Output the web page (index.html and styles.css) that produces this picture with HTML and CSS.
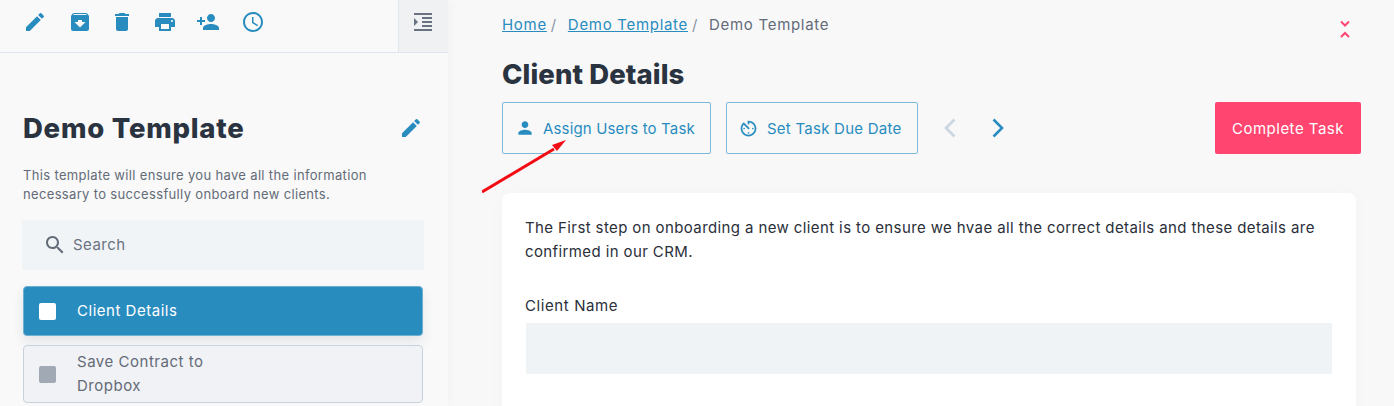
FILE: index.html
```html
<!DOCTYPE html>
<html lang="en">
<head>
<meta charset="utf-8">
<title>Client Details</title>
<link rel="stylesheet" href="styles.css">
</head>
<body>
<div class="app">
  <aside class="sidebar">
    <div class="toolbar">
      <div class="tools">
        <svg class="icon" viewBox="0 0 24 24"><path d="M3 17.25V21h3.75L17.81 9.94l-3.75-3.75L3 17.25zM20.71 7.04a.996.996 0 000-1.41l-2.34-2.34a.996.996 0 00-1.41 0l-1.83 1.83 3.75 3.75 1.83-1.83z"/></svg>
        <svg class="icon tool-archive" viewBox="0 0 24 24"><path d="M20.54 5.23l-1.39-1.68C18.88 3.21 18.47 3 18 3H6c-.47 0-.88.21-1.16.55L3.46 5.23C3.17 5.57 3 6.02 3 6.5V19c0 1.1.9 2 2 2h14c1.1 0 2-.9 2-2V6.5c0-.48-.17-.93-.46-1.27zM12 17.5L6.5 12H10v-2h4v2h3.5L12 17.5zM5.12 5l.81-1h12l.94 1H5.12z"/></svg>
        <svg class="icon tool-trash" viewBox="0 0 24 24"><path d="M6 19c0 1.1.9 2 2 2h8c1.1 0 2-.9 2-2V7H6v12zM19 4h-3.5l-1-1h-5l-1 1H5v2h14V4z"/></svg>
        <svg class="icon" viewBox="0 0 24 24"><path d="M19 8H5c-1.66 0-3 1.34-3 3v6h4v4h12v-4h4v-6c0-1.66-1.34-3-3-3zm-3 11H8v-5h8v5zm3-7c-.55 0-1-.45-1-1s.45-1 1-1 1 .45 1 1-.45 1-1 1zm-1-9H6v4h12V3z"/></svg>
        <svg class="icon" viewBox="0 0 24 24"><path d="M15 12c2.21 0 4-1.79 4-4s-1.79-4-4-4-4 1.79-4 4 1.79 4 4 4zm-9-2V7H4v3H1v2h3v3h2v-3h3v-2H6zm9 4c-2.67 0-8 1.34-8 4v2h16v-2c0-2.66-5.33-4-8-4z"/></svg>
        <svg class="icon tool-clock" viewBox="0 0 24 24"><path d="M11.99 2C6.47 2 2 6.48 2 12s4.47 10 9.99 10C17.52 22 22 17.52 22 12S17.52 2 11.99 2zM12 20c-4.42 0-8-3.58-8-8s3.58-8 8-8 8 3.58 8 8-3.58 8-8 8zm.5-13H11v6l5.25 3.15.75-1.23-4.5-2.67z"/></svg>
      </div>
      <div class="toggle">
        <svg class="icon icon-grey" viewBox="0 0 24 24"><path d="M3 21h18v-2H3v2zM3 8v8l4-4-4-4zm8 9h10v-2H11v2zM3 3v2h18V3H3zm8 6h10V7H11v2zm0 4h10v-2H11v2z"/></svg>
      </div>
    </div>
    <div class="side-body">
      <div class="side-title">
        <h2>Demo Template</h2>
        <svg class="icon" viewBox="0 0 24 24"><path d="M3 17.25V21h3.75L17.81 9.94l-3.75-3.75L3 17.25zM20.71 7.04a.996.996 0 000-1.41l-2.34-2.34a.996.996 0 00-1.41 0l-1.83 1.83 3.75 3.75 1.83-1.83z"/></svg>
      </div>
      <p class="side-desc">This template will ensure you have all the information necessary to successfully onboard new clients.</p>
      <div class="search">
        <svg class="icon icon-search" viewBox="0 0 24 24"><path d="M15.5 14h-.79l-.28-.27C15.41 12.59 16 11.11 16 9.5 16 5.91 13.09 3 9.5 3S3 5.91 3 9.5 5.91 16 9.5 16c1.61 0 3.09-.59 4.23-1.57l.27.28v.79l5 4.99L20.49 19l-4.99-5zm-6 0C7.01 14 5 11.99 5 9.5S7.01 5 9.5 5 14 7.01 14 9.5 11.99 14 9.5 14z"/></svg>
        <span class="search-text">Search</span>
      </div>
      <div class="task task-active">
        <span class="check"></span>
        <span class="task-label">Client Details</span>
      </div>
      <div class="task task-next">
        <span class="check"></span>
        <span class="task-label">Save Contract to<br>Dropbox</span>
      </div>
    </div>
  </aside>
  <main class="main">
    <div class="crumb-row">
      <nav class="crumbs">
        <a href="#">Home</a><span class="sep">/</span>
        <a href="#">Demo Template</a><span class="sep">/</span>
        <span class="crumb-current">Demo Template</span>
      </nav>
      <svg class="collapse" viewBox="0 0 16 20"><path d="M4 1.500l4 4 4-4M4 17l4-4 4 4"/></svg>
    </div>
    <h1>Client Details</h1>
    <div class="actions">
      <button class="btn btn-assign">
        <svg class="icon icon-user" viewBox="0 0 24 24"><path d="M12 12c2.210 0 4-1.790 4-4s-1.790-4-4-4-4 1.790-4 4 1.790 4 4 4zm0 2c-2.670 0-8 1.340-8 4v2h16v-2c0-2.660-5.330-4-8-4z"/></svg>
        Assign Users to Task
      </button>
      <button class="btn btn-due">
        <svg class="icon icon-timer" viewBox="0 0 24 24"><path d="M11 17c0 .55.45 1 1 1s1-.45 1-1-.45-1-1-1-1 .45-1 1zm0-14v4h2V5.080c3.390.49 6 3.390 6 6.920 0 3.870-3.130 7-7 7s-7-3.130-7-7c0-1.680.59-3.220 1.580-4.420L12 13l1.410-1.410-6.800-6.800v.02C4.420 6.450 3 9.050 3 12c0 4.970 4.020 9 9 9 4.970 0 9-4.030 9-9s-4.030-9-9-9h-1zm7 9c0-.55-.45-1-1-1s-1 .45-1 1 .45 1 1 1 1-.45 1-1zM6 12c0 .55.45 1 1 1s1-.45 1-1-.45-1-1-1-1 .45-1 1z"/></svg>
        Set Task Due Date
      </button>
      <svg class="nav-chevron nav-prev" viewBox="0 0 12 20"><path d="M10.500 1.500L2 10l8.500 8.500"/></svg>
      <svg class="nav-chevron nav-next" viewBox="0 0 12 20"><path d="M1.500 1.500L10 10l-8.500 8.500"/></svg>
      <button class="btn-complete">Complete Task</button>
    </div>
    <section class="card">
      <p class="card-intro">The First step on onboarding a new client is to ensure we hvae all the correct details and these details are confirmed in our CRM.</p>
      <label class="field-label">Client Name</label>
      <div class="field"></div>
    </section>
    <svg class="annotation" viewBox="0 0 90 60"><path class="annotation-line" d="M0 57L72 14"/><path class="annotation-head" d="M84 5L70 10L75 16Z"/></svg>
  </main>
</div>
</body>
</html>
```
FILE: styles.css
```css
* { box-sizing: border-box; }
html, body { margin: 0; height: 406px; overflow: hidden; }
body { font-family: Inter, "Liberation Sans", sans-serif; background: #f8f8f8; color: #2a3340; }
.app { display: flex; height: 406px; overflow: hidden; }
.icon { width: 24px; height: 24px; fill: #288cbf; flex: none; display: block; }
.icon-grey { fill: #687280; }

.sidebar { width: 448px; flex: none; background: #f9f9f9; box-shadow: 0 0 12px rgba(30,40,60,.04); }
.toolbar { height: 53px; display: flex; justify-content: space-between; border-bottom: 1px solid #dfe6ed; }
.tools { display: flex; gap: 19px; padding: 10px 0 0 23px; }
.tool-archive { margin-left: 2px; }
.tool-trash { margin-left: -1px; }
.tool-clock { margin-left: 2px; }
.toggle { width: 50px; background: #f0f1f3; border-left: 1px solid #dfe6ed; padding: 10px 0 0 12px; }

.side-body { padding: 57px 25px 0 23px; }
.side-title { display: flex; justify-content: space-between; align-items: center; }
.side-title h2 { margin: 0; font-size: 27.5px; line-height: 36px; font-weight: 800; letter-spacing: .75px; color: #2a3340; }
.side-desc { margin: 20px 0 0; width: 360px; font-size: 13px; line-height: 19px; letter-spacing: .34px; color: #636b78; }
.search { display: flex; align-items: center; gap: 6px; height: 50px; margin: 16px 0 16px -1px; width: 402px; padding-left: 21px; background: #f1f4f7; font-size: 15px; letter-spacing: .45px; color: #6a7280; }
.search-text { margin-top: -2px; }
.icon-search { fill: #636b78; }
.task { display: flex; align-items: center; width: 400px; border-radius: 4px; font-size: 15px; line-height: 24px; letter-spacing: .52px; }
.check { width: 17px; height: 17px; margin: 0 21px 0 15px; border-radius: 2px; flex: none; }
.task-active { height: 50px; background: #288cbf; color: #fff; border: 1px solid #6fb0d2; box-shadow: 0 6px 12px rgba(40,60,90,.1); margin-bottom: 9px; }
.task-active .check { background: #fff; }
.task-next { height: 58px; background: #f1f2f5; color: #636b78; border: 1px solid #c8d2de; }
.task-next .check { background: #a0a9b4; }

.main { flex: 1; min-width: 0; position: relative; padding: 0 33px 0 54px; }
.crumb-row { height: 52px; display: flex; justify-content: space-between; align-items: flex-start; padding-top: 15px; }
.crumbs { font-size: 15px; line-height: 20px; letter-spacing: .7px; color: #636b78; }
.crumbs a { color: #288cbf; text-decoration: underline; }
.sep { margin: 0 6px 0 4px; color: #8a94a2; }
.collapse { width: 16px; height: 20px; margin: 5px 8px 0 0; fill: none; stroke: #ff4570; stroke-width: 2; }
h1 { margin: 0; font-size: 27.5px; line-height: 44px; font-weight: 800; letter-spacing: .1px; color: #2a3340; }
.actions { display: flex; align-items: center; height: 52px; margin-top: 6px; }
.btn { display: flex; align-items: center; gap: 8px; height: 52px; padding: 0; background: transparent; border: 1px solid #7cb8d8; border-radius: 2px; font: inherit; font-size: 15px; color: #288cbf; }
.btn-assign { width: 209px; padding-left: 12px; letter-spacing: .15px; }
.btn-due { width: 192px; margin-left: 15px; padding-left: 11px; letter-spacing: .25px; }
.icon-user { width: 20px; height: 20px; }
.icon-timer { width: 21px; height: 21px; }
.nav-chevron { width: 12px; height: 20px; flex: none; fill: none; stroke-width: 2.6; }
.nav-prev { stroke: #cbd5df; margin-left: 26px; }
.nav-next { stroke: #288cbf; margin-left: 36px; }
.btn-complete { margin-left: auto; width: 146px; height: 52px; border: 0; border-radius: 2px; background: #ff4570; color: #fff; font: inherit; font-size: 15px; letter-spacing: .5px; }
.card { margin: 39px 5px 0 0; height: 300px; padding: 23px 23px; background: #fff; border-radius: 8px; box-shadow: 0 0 20px rgba(30,40,60,.02); }
.card-intro { margin: 0; font-size: 15px; line-height: 24px; letter-spacing: .39px; color: #2a2f3a; }
.field-label { display: block; margin-top: 30px; font-size: 15px; line-height: 24px; letter-spacing: .6px; color: #2a2f3a; }
.field { height: 51px; margin: 5px 1px 0 1px; background: #f0f3f6; }
.annotation { position: absolute; left: 34px; top: 135px; width: 90px; height: 60px; }
.annotation-line { fill: none; stroke: #f20d14; stroke-width: 3; }
.annotation-head { fill: #f20d14; }
```
